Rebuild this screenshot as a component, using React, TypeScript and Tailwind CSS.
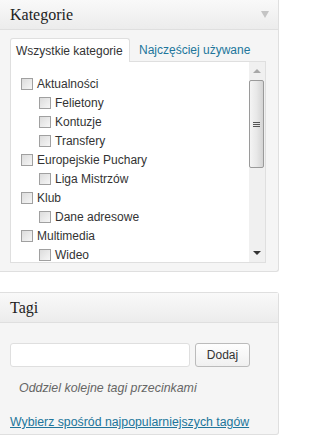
import React from "react";

const categories: { name: string; child?: boolean }[] = [
  { name: "Aktualności" },
  { name: "Felietony", child: true },
  { name: "Kontuzje", child: true },
  { name: "Transfery", child: true },
  { name: "Europejskie Puchary" },
  { name: "Liga Mistrzów", child: true },
  { name: "Klub" },
  { name: "Dane adresowe", child: true },
  { name: "Multimedia" },
  { name: "Wideo", child: true },
];

function Checkbox() {
  return (
    <span className="block h-[12px] w-[12px] shrink-0 border border-[#a0a0a0] bg-gradient-to-br from-[#dcdcdc] to-[#f6f6f6]" />
  );
}

function PanelHeader({ title, toggle }: { title: string; toggle?: boolean }) {
  return (
    <div className="flex h-[30px] items-center justify-between border-b border-[#dfdfdf] bg-gradient-to-b from-[#f9f9f9] to-[#ececec] pl-[10px] pr-[9px]">
      <span className="font-['Liberation_Serif',Georgia,serif] text-[16px] leading-none text-[#222]">
        {title}
      </span>
      {toggle ? (
        <span className="h-0 w-0 border-x-[4px] border-t-[7px] border-x-transparent border-t-[#c4c4c4]" />
      ) : null}
    </div>
  );
}

function Scrollbar() {
  return (
    <div className="flex w-[16px] shrink-0 flex-col bg-[#f0f0f0]">
      <div className="flex h-[17px] items-center justify-center pt-[1px]">
        <span className="h-0 w-0 border-x-[4px] border-b-[4px] border-x-transparent border-b-[#a8a8a8]" />
      </div>
      <div className="mr-[1px] mt-[1px] flex h-[88px] flex-col items-center justify-center gap-[1px] rounded-[2px] border border-[#9a9a9a] bg-gradient-to-r from-[#f4f4f4] via-[#e8e8e8] to-[#d4d4d4]">
        <span className="h-[1px] w-[7px] bg-[#555]" />
        <span className="h-[1px] w-[7px] bg-[#555]" />
        <span className="h-[1px] w-[7px] bg-[#555]" />
      </div>
      <div className="flex-1" />
      <div className="flex h-[17px] items-center justify-center pb-[2px]">
        <span className="h-0 w-0 border-x-[4px] border-t-[4px] border-x-transparent border-t-[#333]" />
      </div>
    </div>
  );
}

export default function App() {
  return (
    <div className="h-[446px] w-[282px] overflow-hidden bg-white font-['Liberation_Sans',Arial,sans-serif] text-[12px] text-[#333]">
      {/* Kategorie */}
      <div className="flex h-[272px] w-[279px] flex-col rounded-br-[3px] border-b border-r border-[#dfdfdf] bg-[#f5f5f5]">
        <PanelHeader title="Kategorie" toggle />
        <div className="pl-[10px] pr-[12px] pt-[8px]">
          <div className="flex h-[23px] items-stretch">
            <div className="relative z-10 flex h-[24px] w-[120px] items-center rounded-t-[3px] border border-b-0 border-[#dfdfdf] bg-white pl-[5px] pt-[1px]">
              Wszystkie kategorie
            </div>
            <div className="flex items-center pl-[9px] pt-[1px] text-[#21759b]">
              Najczęściej używane
            </div>
          </div>
          <div className="flex h-[202px] border border-[#dfdfdf] bg-white">
            <div className="flex-1 overflow-hidden pl-[10px] pt-[12px]">
              {categories.map((c) => (
                <div
                  key={c.name}
                  className={`flex h-[19px] items-center gap-[4px] ${c.child ? "pl-[18px]" : ""}`}
                >
                  <Checkbox />
                  <span className="leading-none">{c.name}</span>
                </div>
              ))}
            </div>
            <Scrollbar />
          </div>
        </div>
      </div>

      {/* Tagi */}
      <div className="mt-[20px] flex h-[143px] w-[279px] flex-col rounded-r-[3px] border-b border-r border-t border-[#dfdfdf] bg-[#f5f5f5]">
        <PanelHeader title="Tagi" />
        <div className="pl-[10px] pt-[20px]">
          <div className="flex items-center gap-[5px]">
            <input
              type="text"
              className="h-[24px] w-[180px] rounded-[3px] border border-[#dfdfdf] bg-white px-[4px] outline-none"
            />
            <button
              type="button"
              className="h-[24px] w-[55px] rounded-[3px] border border-[#bbb] bg-gradient-to-b from-[#fefefe] to-[#f0f0f0] text-[12px] text-[#333]"
            >
              Dodaj
            </button>
          </div>
          <p className="mt-[12px] pl-[9px] text-[12.4px] italic leading-[18px] text-[#666]">
            Oddziel kolejne tagi przecinkami
          </p>
          <a
            href="#"
            className="mt-[16px] block text-[12.3px] leading-[18px] text-[#21759b] underline"
          >
            Wybierz spośród najpopularniejszych tagów
          </a>
        </div>
      </div>
    </div>
  );
}
